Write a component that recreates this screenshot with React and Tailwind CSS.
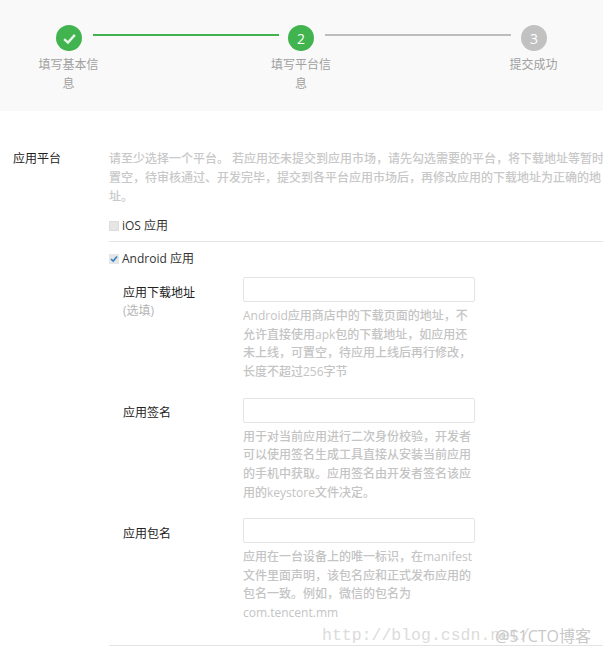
const font = { fontFamily: '"Open Sans","Noto Sans CJK SC",sans-serif' };

function Circle({ bg, children }) {
  return (
    <div className={`w-[26px] h-[26px] rounded-full ${bg} flex items-center justify-center text-white text-[14px] shrink-0`}>
      {children}
    </div>
  );
}

function Field({ label, sub, lines, className }) {
  return (
    <div className={`flex ${className}`}>
      <div className="w-[134px] pl-[14px] pt-[5.6px] shrink-0">
        <div className="text-[12px] leading-[19px] text-[#222]">{label}</div>
        {sub && <div className="text-[12px] leading-[18px] text-[#b5b5b5]">{sub}</div>}
      </div>
      <div className="w-[232px]">
        <div className="h-[25px] border border-[#e4e4e4] rounded-[2px] bg-white" />
        <div className="mt-[5px] text-[12px] leading-[18.6px] text-[#c4c4c4] font-medium whitespace-nowrap">
          {lines.map((l) => (
            <div key={l}>{l}</div>
          ))}
        </div>
      </div>
    </div>
  );
}

export default function App() {
  return (
    <div style={font} className="relative w-[603px] h-[653px] overflow-hidden bg-white">
      <div className="h-[111px] bg-[#f9f9f9] pt-[25px]">
        <div className="flex items-center pl-[56px] pr-[56px]">
          <Circle bg="bg-[#41b44f]">
            <svg width="15" height="15" viewBox="0 0 14 14" fill="none" stroke="#e8f5ea" strokeWidth="2.2">
              <path d="M2 7.5 L5.6 10.8 L12 3.6" />
            </svg>
          </Circle>
          <div className="flex-1 h-[2px] bg-[#41b44f] ml-[11px] mr-[9px] -translate-y-[3px]" />
          <Circle bg="bg-[#41b44f]">2</Circle>
          <div className="flex-1 h-[2px] bg-[#bdbdbd] ml-[11px] mr-[10px] -translate-y-[3px]" />
          <Circle bg="bg-[#c1c1c1]">3</Circle>
        </div>
        <div className="flex gap-[170.5px] pl-[37.5px] mt-[4px] text-[12px] leading-[19px] text-[#a0a0a0] text-center">
          <div className="w-[62px]">填写基本信息</div>
          <div className="w-[62px]">填写平台信息</div>
          <div className="w-[62px]">提交成功</div>
        </div>
      </div>

      <div className="flex pt-[38px]">
        <div className="w-[109px] pl-[13px] text-[12px] leading-[19px] text-[#222] shrink-0">应用平台</div>
        <div className="flex-1 min-w-0">
          <div className="text-[12px] leading-[19px] text-[#c8c8c8] font-medium whitespace-nowrap">
            <div>请至少选择一个平台。 若应用还未提交到应用市场，请先勾选需要的平台，将下载地址等暂时</div>
            <div>置空，待审核通过、开发完毕，提交到各平台应用市场后，再修改应用的下载地址为正确的地</div>
            <div>址。</div>
          </div>
          <div className="flex items-center h-[20px] mt-[10px] text-[12px] text-[#333]">
            <span className="w-[10px] h-[10px] bg-[#e6e6e6] border border-[#dcdcdc] mr-[3px]" />
            iOS 应用
          </div>
          <div className="h-px bg-[#e4e4e4] mt-[5px]" />
          <div className="flex items-center h-[20px] mt-[7px] text-[12px] text-[#333]">
            <span className="w-[10px] h-[10px] bg-[#e6e6e6] mr-[3px] flex items-center justify-center">
              <svg width="8" height="8" viewBox="0 0 8 8" fill="none" stroke="#2f7fc1" strokeWidth="1.6">
                <path d="M1 4 L3.2 6 L7 1.6" />
              </svg>
            </span>
            Android 应用
          </div>
          <Field
            className="mt-[8px]"
            label="应用下载地址"
            sub="(选填)"
            lines={["Android应用商店中的下载页面的地址，不", "允许直接使用apk包的下载地址，如应用还", "未上线，可置空，待应用上线后再行修改，", "长度不超过256字节"]}
          />
          <Field
            className="mt-[16.5px]"
            label="应用签名"
            lines={["用于对当前应用进行二次身份校验，开发者", "可以使用签名生成工具直接从安装当前应用", "的手机中获取。应用签名由开发者签名该应", "用的keystore文件决定。"]}
          />
          <Field
            className="mt-[16px]"
            label="应用包名"
            lines={["应用在一台设备上的唯一标识，在manifest", "文件里面声明，该包名应和正式发布应用的", "包名一致。例如，微信的包名为", "com.tencent.mm"]}
          />
          <div className="h-px bg-[#e4e4e4] mt-[22px]" />
        </div>
      </div>

      <div className="absolute left-[322px] top-[624px] text-[16.5px] text-[#dcdcdc] whitespace-nowrap" style={{ fontFamily: '"Liberation Mono",monospace' }}>
        http://blog.csdn.net/
      </div>
      <div className="absolute left-[495px] top-[624px] text-[16px] text-[#c8c8c8] whitespace-nowrap">
        @51CTO博客
      </div>
    </div>
  );
}
